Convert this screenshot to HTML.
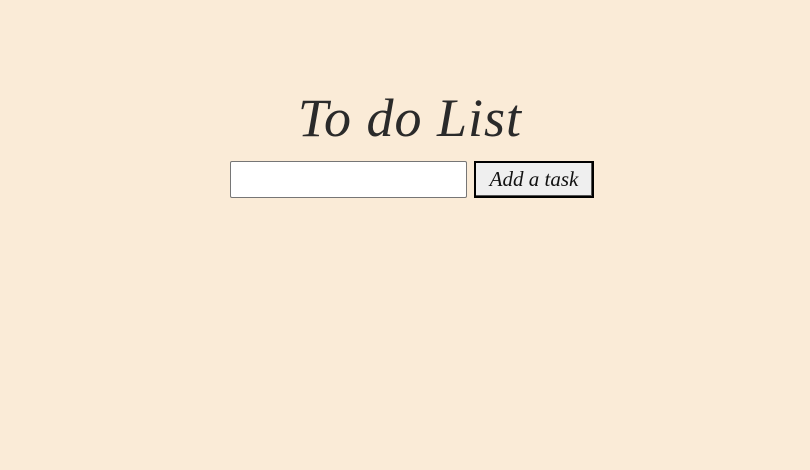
<!DOCTYPE html>
<html><head><meta charset="utf-8"><style>
html,body{margin:0;padding:0;}
body{width:810px;height:470px;background:#faebd7;position:relative;overflow:hidden;font-family:"Liberation Serif",serif;}
h1{position:absolute;top:88px;left:5px;width:810px;margin:0;text-align:center;font-style:italic;font-weight:normal;font-size:54px;letter-spacing:1px;color:#2a2a2a;line-height:60px;}
.inp{position:absolute;left:230px;top:161px;width:235px;height:35px;background:#fff;border:1px solid #767676;border-radius:2px;}
.btn{position:absolute;left:474px;top:161px;width:116px;height:33px;background:#efefef;border:2px solid #000;box-shadow:inset -1px -1px 0 #555;font-style:italic;font-size:21px;color:#111;text-align:center;line-height:33px;}
</style></head><body>
<h1>To do List</h1>
<div class="inp"></div>
<div class="btn">Add a task</div>
</body></html>
